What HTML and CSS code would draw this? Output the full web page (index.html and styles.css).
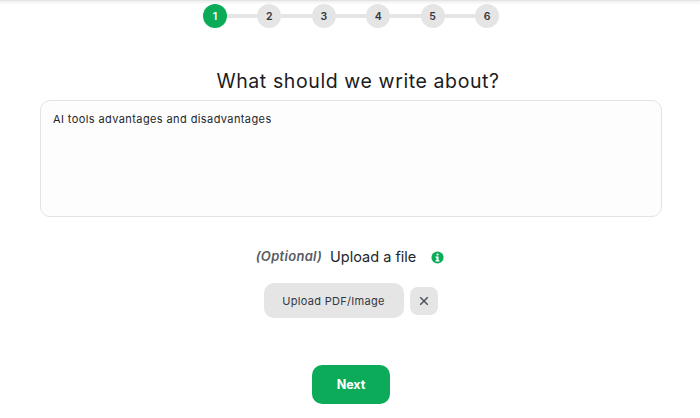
FILE: index.html
```html
<!DOCTYPE html>
<html lang="en">
<head>
<meta charset="utf-8">
<title>What should we write about?</title>
<link rel="stylesheet" href="styles.css">
</head>
<body>
<div class="topbar"></div>
<main class="page">
  <ol class="stepper">
    <li class="step active">1</li>
    <li class="link"></li>
    <li class="step">2</li>
    <li class="link"></li>
    <li class="step">3</li>
    <li class="link"></li>
    <li class="step">4</li>
    <li class="link"></li>
    <li class="step">5</li>
    <li class="link"></li>
    <li class="step">6</li>
  </ol>
  <h1 class="title">What should we write about?</h1>
  <div class="textbox">AI tools advantages and disadvantages</div>
  <div class="upload-label">
    <em class="optional">(Optional)</em>
    <span class="upload-text">Upload a file</span>
    <svg class="info" viewBox="0 0 14 14" aria-hidden="true">
      <circle cx="7" cy="7" r="6.5" fill="#0cab59"/>
      <rect x="5.9" y="2.6" width="2.3" height="2.2" rx="1" fill="#fff"/>
      <path d="M4.9 5.9h3.2v4h1v1.4H4.9V9.9h1V7.3h-1z" fill="#fff"/>
    </svg>
  </div>
  <div class="upload-row">
    <button class="upload-btn">Upload PDF/Image</button>
    <button class="close-btn" aria-label="Remove">
      <svg viewBox="0 0 12 12" class="close-icon" aria-hidden="true">
        <path d="M1.5 1.5l9 9M10.5 1.5l-9 9" stroke="#4a4f57" stroke-width="1.7" fill="none"/>
      </svg>
    </button>
  </div>
  <button class="next">Next</button>
</main>
</body>
</html>
```
FILE: styles.css
```css
* { box-sizing: border-box; }
html, body { margin: 0; padding: 0; background: #fff; }
body {
  width: 700px;
  height: 418px;
  overflow: hidden;
  font-family: "Inter", "Open Sans", "Liberation Sans", sans-serif;
  color: #1c1e24;
}
.topbar {
  height: 1px;
  background: #e4e4e4;
  box-shadow: 0 1px 3px rgba(0,0,0,.18);
}
.page {
  display: flex;
  flex-direction: column;
  align-items: center;
}
.stepper {
  list-style: none;
  display: flex;
  align-items: center;
  margin: 3px 0 0 2px;
  padding: 0;
}
.step {
  width: 24px;
  height: 24px;
  border-radius: 50%;
  background: #e5e5e5;
  display: flex;
  align-items: center;
  justify-content: center;
  font-size: 10.5px;
  font-weight: 600;
  color: #33373e;
  flex: none;
}
.step.active { background: #0cab59; color: #fff; }
.link {
  width: 30.6px;
  height: 4px;
  background: #e5e5e5;
  margin: 0 -0.1px;
}
.title {
  margin: 39px 0 0 16px;
  font-size: 19.5px;
  line-height: 28px;
  font-weight: 400;
  letter-spacing: 0.6px;
  color: #1a1c22;
}
.textbox {
  margin: 5px 0 0 2px;
  width: 622px;
  height: 117px;
  background: #fdfdfd;
  border: 1.5px solid #e2e3e3;
  border-radius: 10px;
  padding: 10px 12px;
  font-size: 11px;
  letter-spacing: .4px;
  line-height: 16px;
  color: #23262c;
}
.upload-label {
  display: flex;
  align-items: center;
  margin-top: 28px;
  height: 22px;
  font-size: 14.5px;
}
.optional {
  font-weight: 600;
  font-size: 13px;
  color: #585c63;
  letter-spacing: .3px;
}
.upload-text { margin-left: 8px; color: #23262c; }
.info { width: 13px; height: 13px; margin-left: 15px; margin-top: 2px; }
.upload-row {
  display: flex;
  align-items: center;
  gap: 6px;
  margin-top: 16px;
  margin-left: 1px;
}
.upload-btn {
  width: 140px;
  height: 35px;
  border: 0;
  border-radius: 10px;
  background: #e5e5e5;
  font: 400 11px "Inter", "Open Sans", sans-serif;
  letter-spacing: .3px;
  color: #33373e;
  padding: 0;
}
.close-btn {
  width: 28px;
  height: 28px;
  border: 0;
  border-radius: 8px;
  background: #e5e5e5;
  padding: 0;
  display: flex;
  align-items: center;
  justify-content: center;
}
.close-icon { width: 10px; height: 10px; }
.next {
  margin-top: 47px;
  margin-left: 2px;
  width: 78px;
  height: 39px;
  border: 0;
  border-radius: 10px;
  background: #0cab59;
  color: #fff;
  font: 700 12.5px "Inter", "Open Sans", sans-serif;
  padding: 0;
}
```
